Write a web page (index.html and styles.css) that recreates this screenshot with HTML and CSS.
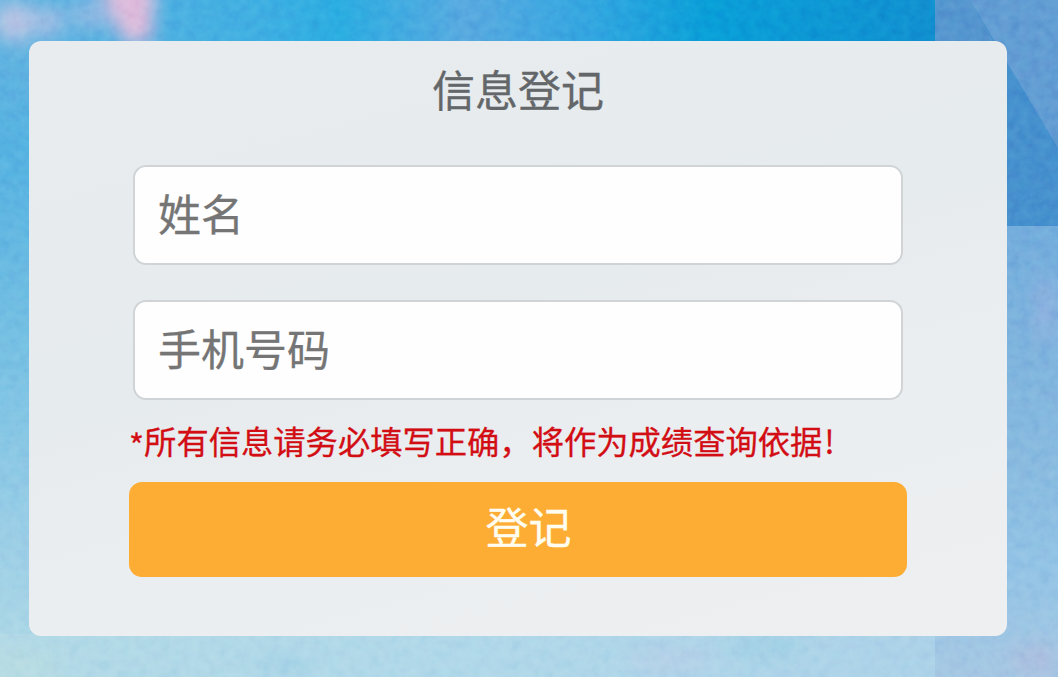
FILE: index.html
```html
<!DOCTYPE html>
<html lang="zh-CN">
<head>
    <meta charset="UTF-8">
    <meta name="viewport" content="width=device-width, initial-scale=1.0">
    <title>信息登记</title>
    <link rel="stylesheet" href="styles.css">
</head>
<body>
    <!-- Watercolor background -->
    <svg class="background" viewBox="0 0 1058 677" preserveAspectRatio="none" aria-hidden="true">
        <defs>
            <linearGradient id="top" x1="0" x2="1" y1="0" y2="0">
                <stop offset="0" stop-color="#62b3e0"/>
                <stop offset="0.25" stop-color="#3fafe2"/>
                <stop offset="0.32" stop-color="#2bade1"/>
                <stop offset="0.44" stop-color="#59aae0"/>
                <stop offset="0.56" stop-color="#32a6e0"/>
                <stop offset="0.67" stop-color="#099fd8"/>
                <stop offset="0.88" stop-color="#1190d0"/>
                <stop offset="1" stop-color="#3c8dcd"/>
            </linearGradient>
            <linearGradient id="left" x1="0" x2="0" y1="0" y2="1">
                <stop offset="0" stop-color="#62b3e0"/>
                <stop offset="0.17" stop-color="#55b2e1"/>
                <stop offset="0.5" stop-color="#79c1e3"/>
                <stop offset="0.78" stop-color="#9bcee6"/>
                <stop offset="1" stop-color="#b2dae6"/>
            </linearGradient>
            <linearGradient id="right" x1="0" x2="0" y1="0" y2="1">
                <stop offset="0" stop-color="#73addc"/>
                <stop offset="0.5" stop-color="#88badf"/>
                <stop offset="0.75" stop-color="#92c3e5"/>
                <stop offset="1" stop-color="#a6c8e3"/>
            </linearGradient>
            <linearGradient id="bottom" x1="0" x2="1" y1="0" y2="0">
                <stop offset="0" stop-color="#b2d9e6"/>
                <stop offset="0.5" stop-color="#b0d8e9"/>
                <stop offset="1" stop-color="#acd2e8"/>
            </linearGradient>
            <filter id="soft" x="-50%" y="-50%" width="200%" height="200%">
                <feGaussianBlur stdDeviation="9"/>
            </filter>
            <filter id="grain" x="0" y="0" width="100%" height="100%" color-interpolation-filters="sRGB">
                <feTurbulence type="fractalNoise" baseFrequency="0.1" numOctaves="3" seed="4"/>
                <feColorMatrix type="saturate" values="0.3"/>
                <feComponentTransfer>
                    <feFuncA type="linear" slope="0" intercept="1"/>
                </feComponentTransfer>
            </filter>
        </defs>
        <rect width="1058" height="677" fill="url(#top)"/>
        <rect y="41" width="60" height="636" fill="url(#left)"/>
        <rect x="935" width="123" height="230" fill="#4691ce"/>
        <path d="M935 0H970L1004 60H935Z" fill="#5596cf"/>
        <path d="M970 0H1058V148Z" fill="#629dd3"/>
        <rect x="935" y="226" width="123" height="451" fill="url(#right)"/>
        <rect y="634" width="935" height="43" fill="url(#bottom)"/>
        <g filter="url(#soft)">
            <ellipse cx="15" cy="22" rx="22" ry="20" fill="#b8c5e4"/>
            <ellipse cx="50" cy="22" rx="12" ry="16" fill="#a9bfe4"/>
            <ellipse cx="90" cy="15" rx="22" ry="16" fill="#8bb9e3"/>
            <path d="M98-20H156L152 42L124 44Z" fill="#dfbcdc"/>
            <ellipse cx="285" cy="664" rx="30" ry="6" fill="#9fcfe6"/>
            <ellipse cx="670" cy="660" rx="45" ry="14" fill="#b4d0e8"/>
            <ellipse cx="765" cy="645" rx="40" ry="10" fill="#a0d0e4"/>
            <ellipse cx="20" cy="665" rx="40" ry="12" fill="#b9dde2"/>
            <ellipse cx="1045" cy="310" rx="8" ry="35" fill="#94b1e0"/>
            <ellipse cx="1035" cy="660" rx="24" ry="16" fill="#acbfe0"/>
        </g>
        <rect class="grain" width="1058" height="677" filter="url(#grain)"/>
    </svg>

    <main class="card">
        <h1>信息登记</h1>
        <form class="register-form">
            <input type="text" placeholder="姓名" aria-label="姓名">
            <input type="tel" placeholder="手机号码" aria-label="手机号码">
            <p class="notice"><span class="star">*</span>所有信息请务必填写正确，将作为成绩查询依据<span class="mark">!</span></p>
            <button type="button">登记</button>
        </form>
    </main>
</body>
</html>
```
FILE: styles.css
```css
* {
    box-sizing: border-box;
}

body {
    margin: 0;
    height: 100vh;
    padding: 41px 51px 41px 29px;
    overflow: hidden;
    background: #7fbfe3;
    font-family: "Noto Sans CJK SC", sans-serif;
    -webkit-text-stroke: 0.3px;
}

.background {
    position: fixed;
    top: 0;
    left: 0;
    width: 100%;
    height: 100%;
    z-index: -1;
}

.grain {
    mix-blend-mode: soft-light;
    opacity: 0.28;
}

.card {
    height: 595px;
    padding: 16px 100px 0;
    border-radius: 12px;
    background: linear-gradient(165deg, #e8ecef, #e6ebee 45%, #ebeef0 65%, #edeff1);
}

h1 {
    margin: 0;
    height: 108px;
    color: #646769;
    font-size: 43px;
    font-weight: 400;
    line-height: 62px;
    text-align: center;
}

.register-form {
    display: flex;
    flex-direction: column;
}

input {
    height: 100px;
    margin: 0 4px 35px;
    padding: 0 23px 7px;
    border: 2px solid #d0d4d6;
    border-radius: 13px;
    background: #fefefe;
    color: #333;
    font-family: inherit;
    font-size: 43px;
}

input[type="tel"] {
    margin-bottom: 16px;
}

input::placeholder {
    color: #757575;
    opacity: 1;
}

.notice {
    margin: 0 0 18px;
    height: 48px;
    color: #d20d14;
    font-size: 32.3px;
    line-height: 48px;
    white-space: nowrap;
}

/* Drop the asterisk to sit nearer the middle of the characters */
.star {
    line-height: 0;
    vertical-align: -4px;
}

.mark {
    margin-left: 2px;
}

button {
    height: 95px;
    padding: 0 0 9px 21px;
    border: none;
    border-radius: 13px;
    background: #fdad34;
    color: #fffdf0;
    font-family: inherit;
    font-size: 43px;
    cursor: pointer;
}
```
